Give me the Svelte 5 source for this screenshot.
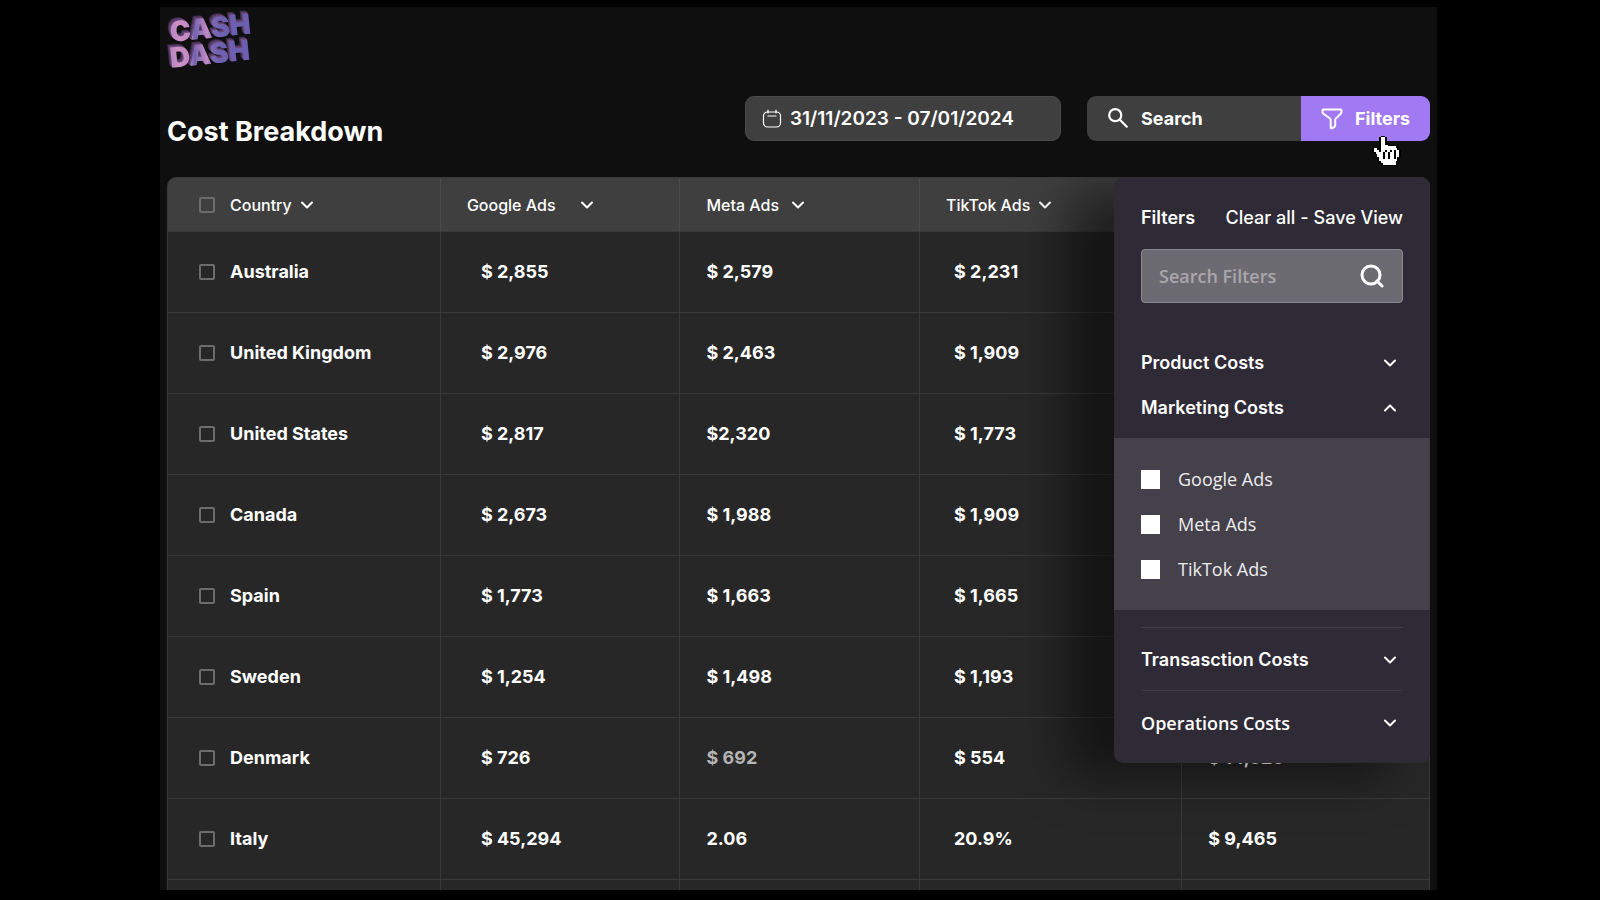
<script lang="ts">
  type Row = { country: string; values: string[]; dim?: number[] };

  const columns = ['Google Ads', 'Meta Ads', 'TikTok Ads'];

  const rows: Row[] = [
    { country: 'Australia', values: ['$ 2,855', '$ 2,579', '$ 2,231', ''] },
    { country: 'United Kingdom', values: ['$ 2,976', '$ 2,463', '$ 1,909', ''] },
    { country: 'United States', values: ['$ 2,817', '$2,320', '$ 1,773', ''] },
    { country: 'Canada', values: ['$ 2,673', '$ 1,988', '$ 1,909', ''] },
    { country: 'Spain', values: ['$ 1,773', '$ 1,663', '$ 1,665', ''] },
    { country: 'Sweden', values: ['$ 1,254', '$ 1,498', '$ 1,193', ''] },
    { country: 'Denmark', values: ['$ 726', '$ 692', '$ 554', '$ 14,320'], dim: [1] },
    { country: 'Italy', values: ['$ 45,294', '2.06', '20.9%', '$ 9,465'] }
  ];

  let selected = $state<string[]>([]);
  let activeFilters = $state<string[]>([]);
  let filterQuery = $state('');
  let panelOpen = $state(true);
  let open = $state<Record<string, boolean>>({ marketing: true });

  let allSelected = $derived(selected.length === rows.length);

  function toggleAll() {
    selected = allSelected ? [] : rows.map((row) => row.country);
  }

  function toggle(section: string) {
    open[section] = !open[section];
  }

  // Pixel-art hand, one string per row: # outline, o fill
  const hand = [
    '.....##.........',
    '....#oo#........',
    '....#oo#........',
    '....#oo#........',
    '....#oo###......',
    '....#oooo###....',
    '.##.#oooooooo##.',
    '#oo##ooooooooo#.',
    '#ooo#oo#oo#o#oo#',
    '.#oooo#oo#oo#oo#',
    '..#ooo#oo#oo#oo#',
    '..#ooo#oo#oo#oo#',
    '...#oo#oo#oo#o#.',
    '...#oooooooooo#.',
    '....#oooooooo#..',
    '.....#ooooooo#..',
    '.....#########..'
  ];
</script>

{#snippet chevron(up = false)}
  <svg class="chevron" class:chevron--up={up} viewBox="0 0 14 14" aria-hidden="true">
    <path d="M2 4.5 7 9.5 12 4.5" />
  </svg>
{/snippet}

<main class="board">
  <svg class="logo" viewBox="0 0 88 62" role="img" aria-label="Cash Dash">
    <defs>
      <linearGradient id="logoFill" x1="0" x2="1">
        <stop offset="0" stop-color="#b583c4" />
        <stop offset="0.1" stop-color="#cb90c4" />
        <stop offset="0.24" stop-color="#c48ac6" />
        <stop offset="0.3" stop-color="#6f63b0" />
        <stop offset="0.46" stop-color="#c48ac6" />
        <stop offset="0.52" stop-color="#7a68b4" />
        <stop offset="0.7" stop-color="#6a5fb0" />
        <stop offset="1" stop-color="#6a5fb0" />
      </linearGradient>
    </defs>
    <g class="logo__text" fill="url(#logoFill)">
      <text transform="translate(4 35) rotate(-6)">CASH</text>
      <text transform="translate(4 61) rotate(-6)">DASH</text>
    </g>
  </svg>

  <header class="toolbar">
    <h1 class="toolbar__title">Cost Breakdown</h1>
    <button class="toolbar__dates">
      <svg viewBox="0 0 20 20" aria-hidden="true">
        <rect x="1.5" y="3" width="17" height="15" rx="4" />
        <path d="M6 1v3M14 1v3M6 7h8" />
      </svg>
      31/11/2023 - 07/01/2024
    </button>
    <div class="toolbar__group">
      <button class="toolbar__search">
        <svg viewBox="0 0 20 20" aria-hidden="true">
          <circle cx="7.5" cy="6.5" r="5.5" />
          <path d="M11.5 10.5 18 17" />
        </svg>
        Search
      </button>
      <button class="toolbar__filters" onclick={() => (panelOpen = !panelOpen)}>
        <svg viewBox="0 0 22 22" aria-hidden="true">
          <path
            d="M2.5 1.5h17a1 1 0 0 1 1 1v1.6a2 2 0 0 1-.6 1.4l-5.1 5.1a2 2 0 0 0-.6 1.4v5.6a1.5 1.5 0 0 1-.8 1.3l-2.2 1.3a1 1 0 0 1-1.5-.9V12a2 2 0 0 0-.6-1.4L2.1 5.500a2 2 0 0 1-.6-1.400V2.500a1 1 0 0 1 1-1z"
          />
        </svg>
        Filters
      </button>
      <svg class="cursor" viewBox="0 0 16 17" aria-hidden="true">
        {#each hand as line, y}
          {#each line as pixel, x}
            {#if pixel !== '.'}
              <rect {x} {y} width="1" height="1" fill={pixel === '#' ? '#000' : '#fff'} />
            {/if}
          {/each}
        {/each}
      </svg>
    </div>
  </header>

  <section class="content">
    <div class="tableWrap">
      <table class="costs">
        <colgroup>
          <col class="costs__country" />
          <col class="costs__google" />
          <col class="costs__meta" />
          <col class="costs__tiktok" />
          <col />
        </colgroup>
        <thead>
          <tr>
            <th>
              <div class="costs__name">
                <input type="checkbox" aria-label="Select all" checked={allSelected} onchange={toggleAll} />
                <button class="costs__sort">Country {@render chevron()}</button>
              </div>
            </th>
            {#each columns as column}
              <th><button class="costs__sort">{column} {@render chevron()}</button></th>
            {/each}
            <th></th>
          </tr>
        </thead>
        <tbody>
          {#each rows as row (row.country)}
            <tr>
              <td>
                <label class="costs__name">
                  <input type="checkbox" value={row.country} bind:group={selected} />
                  {row.country}
                </label>
              </td>
              {#each row.values as value, i}
                <td class:costs__cell--dim={row.dim?.includes(i)}>{value}</td>
              {/each}
            </tr>
          {/each}
          <tr>
            <td></td>
            <td></td>
            <td></td>
            <td></td>
            <td></td>
          </tr>
        </tbody>
      </table>
    </div>

    {#if panelOpen}
      <aside class="panel">
        <div class="panel__head">
          <h2 class="panel__title">Filters</h2>
          <div class="panel__actions">
            <button onclick={() => (activeFilters = [])}>Clear all</button>
            <span>-</span>
            <button>Save View</button>
          </div>
        </div>

        <label class="panel__search">
          <input type="text" placeholder="Search Filters" aria-label="Search Filters" bind:value={filterQuery} />
          <svg viewBox="0 0 24 24" aria-hidden="true">
            <circle cx="11" cy="11" r="9" />
            <path d="M17 17 22 22" />
          </svg>
        </label>

        <button class="panel__section" onclick={() => toggle('product')}>
          Product Costs {@render chevron(open.product)}
        </button>
        <button class="panel__section" onclick={() => toggle('marketing')}>
          Marketing Costs {@render chevron(open.marketing)}
        </button>

        {#if open.marketing}
          <div class="panel__options">
            {#each columns as column}
              <label class="panel__option">
                <input type="checkbox" value={column} bind:group={activeFilters} />
                {column}
              </label>
            {/each}
          </div>
        {/if}

        <div class="panel__footer">
          <button class="panel__section panel__section--ruled" onclick={() => toggle('transaction')}>
            Transasction Costs {@render chevron(open.transaction)}
          </button>
          <button
            class="panel__section panel__section--ruled panel__section--light"
            onclick={() => toggle('operations')}
          >
            Operations Costs {@render chevron(open.operations)}
          </button>
        </div>
      </aside>
    {/if}
  </section>
</main>

<style>
  :global(body) {
    background: #000;
  }

  .board {
    --line: #3a3a3a;
    display: flex;
    flex-direction: column;
    box-sizing: border-box;
    height: calc(100vh - 17px);
    margin: 7px 163px 0 160px;
    padding: 0 7px;
    background: #0f0f0f;
    color: #fff;
    font-family: Inter, 'Liberation Sans', sans-serif;
    font-size: 18px;
    font-weight: 700;
    line-height: 24px;
  }

  button {
    padding: 0;
    border: none;
    background: transparent;
    color: inherit;
    font: inherit;
    cursor: pointer;
  }

  svg {
    flex: none;
    fill: none;
    stroke: currentColor;
    stroke-linecap: round;
    stroke-linejoin: round;
  }

  .logo {
    width: 88px;
    height: 62px;
    overflow: visible;
    stroke: none;
  }

  .logo__text {
    font-size: 28px;
    font-weight: 900;
    filter: drop-shadow(-1px -1px 0 #6d4a78) drop-shadow(-1px -1px 0 #553a66) drop-shadow(-1px -1px 0 #3d2b4c);
  }

  .toolbar {
    flex: none;
    display: flex;
    align-items: flex-start;
    box-sizing: border-box;
    height: 108px;
    padding-top: 27px;
  }

  .toolbar__title {
    flex: 1;
    margin: 20px 0 0;
    font-size: 27px;
    font-weight: 700;
    line-height: 32px;
  }

  .toolbar__dates {
    display: flex;
    align-items: center;
    gap: 8px;
    box-sizing: border-box;
    width: 316px;
    height: 45px;
    margin-right: 26px;
    padding: 0 16px;
    border: 1px solid #4a4a4a;
    border-radius: 9px;
    background: #3f3f3f;
    font-size: 19px;
    font-weight: 600;
  }

  .toolbar__dates svg {
    width: 20px;
    height: 20px;
    stroke-width: 1.2;
  }

  .toolbar__group {
    position: relative;
    z-index: 1;
    display: flex;
    height: 45px;
  }

  .toolbar__search,
  .toolbar__filters {
    display: flex;
    align-items: center;
    gap: 12px;
    padding: 0 20px;
  }

  .toolbar__search {
    width: 214px;
    border-radius: 9px 0 0 9px;
    background: #3f3f3f;
  }

  .toolbar__search svg {
    width: 22px;
    height: 22px;
    stroke-width: 2;
  }

  .toolbar__filters {
    width: 129px;
    border-radius: 0 9px 9px 0;
    background: #a179f2;
  }

  .toolbar__filters svg {
    width: 22px;
    height: 22px;
    stroke-width: 2;
  }

  .cursor {
    position: absolute;
    top: 39px;
    right: 29px;
    width: 29px;
    height: 32px;
    stroke: none;
    shape-rendering: crispEdges;
    pointer-events: none;
  }

  .content {
    position: relative;
    flex: 1;
    min-height: 0;
    overflow: hidden;
  }

  .tableWrap {
    border: 1px solid var(--line);
    border-radius: 9px 9px 0 0;
    overflow: hidden;
    background: #272727;
  }

  .costs {
    width: 100%;
    table-layout: fixed;
    border-collapse: collapse;
    text-align: left;
  }

  .costs__country {
    width: 21.6%;
  }

  .costs__google,
  .costs__meta {
    width: 19%;
  }

  .costs__tiktok {
    width: 20.8%;
  }

  .costs th {
    height: 53px;
    padding: 0 0 0 26px;
    border-bottom: 1px solid var(--line);
    background: #3f3f3f;
    font-size: 16px;
    font-weight: 500;
  }

  .costs td {
    height: 80px;
    padding: 0 0 0 26px;
    border-bottom: 1px solid var(--line);
  }

  .costs th + th {
    border-left: 1px solid #4b4b4b;
  }

  .costs td + td {
    border-left: 1px solid var(--line);
  }

  .costs th:first-child,
  .costs td:first-child {
    padding-left: 31px;
  }

  .costs td:nth-child(2) {
    padding-left: 40px;
  }

  .costs td:nth-child(4) {
    padding-left: 34px;
  }

  .costs .costs__cell--dim {
    color: #b4b4b4;
  }

  .costs__name {
    display: flex;
    align-items: center;
    gap: 15px;
  }

  .costs__name input {
    appearance: none;
    box-sizing: border-box;
    width: 16px;
    height: 16px;
    margin: 0;
    border: 2px solid #6c6c6c;
    border-radius: 2px;
  }

  .costs__name input:checked {
    background: #a179f2;
  }

  .costs__sort {
    display: flex;
    align-items: center;
    gap: 8px;
  }

  .costs th:nth-child(2) .costs__sort {
    gap: 24px;
  }

  .costs th:nth-child(3) .costs__sort {
    gap: 12px;
  }

  .chevron {
    width: 14px;
    height: 14px;
    stroke-width: 2;
  }

  .chevron--up {
    transform: rotate(180deg);
  }

  .panel {
    position: absolute;
    top: 0;
    right: 0;
    box-sizing: border-box;
    width: 316px;
    padding: 29px 0 10px;
    border-radius: 9px;
    background: #2f2b36;
    box-shadow: -45px 12px 50px rgba(0, 0, 0, 0.5);
    font-weight: 600;
  }

  .panel__head {
    display: flex;
    justify-content: space-between;
    padding: 0 27px;
  }

  .panel__title {
    margin: 0;
    font-size: 18px;
    font-weight: 600;
  }

  .panel__actions {
    display: flex;
    gap: 5px;
    font-weight: 500;
  }

  .panel__search {
    display: flex;
    align-items: center;
    box-sizing: border-box;
    height: 54px;
    margin: 19px 27px 37px;
    padding: 0 18px 0 17px;
    border: 1px solid #8b898f;
    border-radius: 4px;
    background: #6d6b72;
  }

  .panel__search input {
    flex: 1;
    min-width: 0;
    padding: 0;
    border: none;
    outline: none;
    background: transparent;
    color: #fff;
    font-family: 'Open Sans', 'Noto Sans', sans-serif;
    font-size: 18px;
    font-weight: 600;
    line-height: 24px;
  }

  .panel__search input::placeholder {
    color: #a9a7ac;
  }

  .panel__search svg {
    width: 24px;
    height: 24px;
    stroke-width: 3;
  }

  .panel__section {
    display: flex;
    align-items: center;
    justify-content: space-between;
    box-sizing: border-box;
    width: 100%;
    height: 45px;
    padding: 0 33px 0 27px;
  }

  .panel__options {
    display: flex;
    flex-direction: column;
    gap: 21px;
    margin-top: 8px;
    padding: 29px 27px;
    background: #45414b;
  }

  .panel__option {
    display: flex;
    align-items: center;
    gap: 18px;
    color: #ececee;
    font-family: 'Open Sans', 'Noto Sans', sans-serif;
    font-weight: 400;
  }

  .panel__option input {
    appearance: none;
    width: 19px;
    height: 19px;
    margin: 0;
    background: #fff;
  }

  .panel__option input:checked {
    background: #a179f2;
  }

  .panel__footer {
    padding: 17px 27px 0;
  }

  .panel__section--ruled {
    height: 63px;
    padding: 1px 6px 0 0;
    border-top: 1px solid #3f3b47;
  }

  .panel__section--light {
    font-family: 'Open Sans', 'Noto Sans', sans-serif;
  }
</style>
